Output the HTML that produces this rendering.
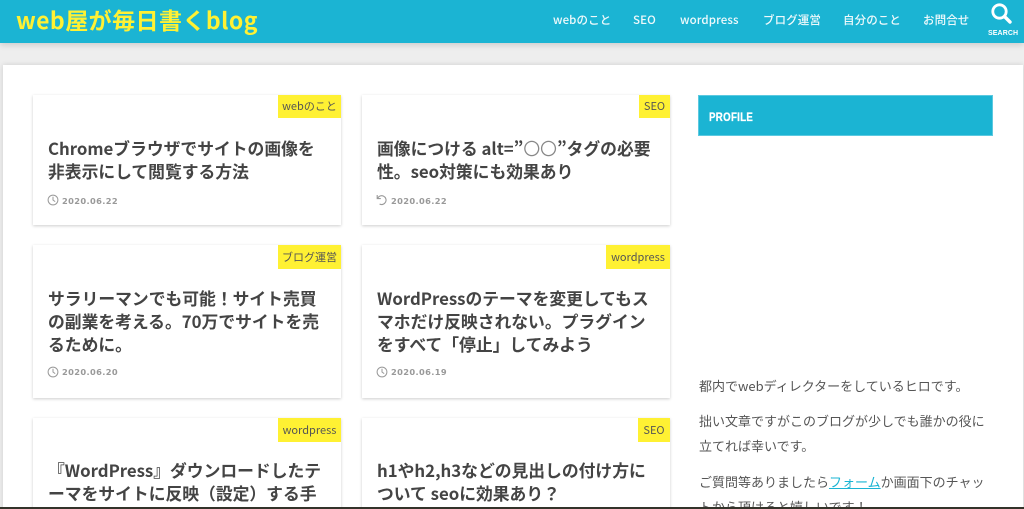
<!DOCTYPE html>
<html lang="ja"><head><meta charset="utf-8"><title>web屋が毎日書くblog</title>
<style>
*{box-sizing:border-box;margin:0;padding:0}
html,body{width:1024px;height:509px;overflow:hidden;background:#eee}
body{position:relative;font-family:"Noto Sans CJK JP",sans-serif;color:#444}
.blur{position:absolute;left:0;top:0;width:1024px;height:509px;overflow:hidden;filter:blur(.35px)}
.hd{position:absolute;left:0;top:0;width:1024px;height:43px;background:#1bb4d3;box-shadow:0 2px 6px rgba(0,0,0,.15)}
.logo{position:absolute;left:16px;top:3px;font-size:23px;line-height:33px;font-weight:700;color:#fff133;letter-spacing:.45px;white-space:nowrap}
.nav{position:absolute;top:11px;font-size:11.5px;line-height:19px;font-weight:500;color:#fff;opacity:.93;white-space:nowrap;letter-spacing:.1px}
.sr{position:absolute;left:988px;top:29px;width:28px;text-align:center;font-family:"Liberation Sans",sans-serif;font-size:7px;line-height:9px;font-weight:700;color:#fff;letter-spacing:.1px}
.main{position:absolute;left:3px;top:65px;width:1020px;height:460px;background:#fff;box-shadow:0 0 5px rgba(0,0,0,.14)}
.card{position:absolute;width:308px;background:#fff;box-shadow:0 1px 3px rgba(0,0,0,.2)}
.tag{position:absolute;right:0;top:0;height:23px;background:#fff133;font-size:11px;line-height:23px;text-align:center;color:#555;white-space:nowrap}
.t{position:absolute;left:15px;top:42px;width:286px;font-size:16.8px;line-height:23px;font-weight:700;color:#444;white-space:nowrap}
.t i{font-style:normal;font-weight:400;color:#888}
.d{position:absolute;left:29px;font-family:"DejaVu Sans",sans-serif;font-size:8.3px;line-height:12px;font-weight:700;color:#999;white-space:nowrap;letter-spacing:.35px}
.ic{position:absolute;left:14px;width:12px;height:12px}
.wt{position:absolute;left:698px;top:95px;width:295px;height:41px;background:#1bb4d3;border:1px solid #5cc9e0}
.wt span{position:absolute;left:10px;top:15px;font-family:"Liberation Sans",sans-serif;font-size:11.5px;line-height:14px;font-weight:700;color:#fff;letter-spacing:.4px;transform:scaleX(.84);transform-origin:left;-webkit-text-stroke:.3px #fff}
.p{position:absolute;left:699px;font-size:13px;line-height:25px;color:#555;white-space:nowrap}
.p a{color:#1bb4d3;text-decoration:underline}
.line{position:absolute;left:0;top:507px;width:1024px;height:2px;background:#33332a}
</style></head><body>
<div class="blur">
<div class="hd">
<div class="logo">web屋が毎日書くblog</div>
<div class="nav" style="left:553px">webのこと</div>
<div class="nav" style="left:633px">SEO</div>
<div class="nav" style="left:680px">wordpress</div>
<div class="nav" style="left:763px">ブログ運営</div>
<div class="nav" style="left:843px">自分のこと</div>
<div class="nav" style="left:923px">お問合せ</div>
<svg style="position:absolute;left:990px;top:2px" width="22" height="22" viewBox="0 0 22 22"><circle cx="9.5" cy="9.5" r="6.7" fill="none" stroke="#fff" stroke-width="2.8"/><path d="M14.5 14.5L20 20" stroke="#fff" stroke-width="3.4" stroke-linecap="round"/></svg>
<div class="sr">SEARCH</div>
</div>
<div class="main"></div>

<div class="card" style="left:33px;top:95px;height:130px"><div class="tag" style="width:63px">webのこと</div>
<div class="t">Chromeブラウザでサイトの画像を<br>非表示にして閲覧する方法</div>
<svg class="ic" style="top:99px" viewBox="0 0 12 12"><circle cx="6" cy="6" r="4.9" fill="none" stroke="#999" stroke-width="1"/><path d="M6 2.8V6L8.2 7.6" fill="none" stroke="#999"/></svg>
<div class="d" style="top:100px">2020.06.22</div></div>

<div class="card" style="left:362px;top:95px;height:130px"><div class="tag" style="width:31px">SEO</div>
<div class="t">画像につける alt=”<i>〇〇</i>”タグの必要<br>性。seo対策にも効果あり</div>
<svg class="ic" style="top:99px" viewBox="0 0 12 12"><path d="M1.2 1V4.6H4.8M1.6 4.4A4.4 4.4 0 1 1 3.6 10" fill="none" stroke="#999" stroke-width="1.1"/></svg>
<div class="d" style="top:100px">2020.06.22</div></div>

<div class="card" style="left:33px;top:245px;height:153px"><div class="tag" style="width:63px;height:24px;line-height:24px">ブログ運営</div>
<div class="t">サラリーマンでも可能！サイト売買<br>の副業を考える。70万でサイトを売<br>るために。</div>
<svg class="ic" style="top:121px" viewBox="0 0 12 12"><circle cx="6" cy="6" r="4.9" fill="none" stroke="#999" stroke-width="1"/><path d="M6 2.8V6L8.2 7.6" fill="none" stroke="#999"/></svg>
<div class="d" style="top:121px">2020.06.20</div></div>

<div class="card" style="left:362px;top:245px;height:153px"><div class="tag" style="width:64px;height:24px;line-height:24px">wordpress</div>
<div class="t">WordPressのテーマを変更してもス<br>マホだけ反映されない。プラグイン<br>をすべて「停止」してみよう</div>
<svg class="ic" style="top:121px" viewBox="0 0 12 12"><circle cx="6" cy="6" r="4.9" fill="none" stroke="#999" stroke-width="1"/><path d="M6 2.8V6L8.2 7.6" fill="none" stroke="#999"/></svg>
<div class="d" style="top:121px">2020.06.19</div></div>

<div class="card" style="left:33px;top:418px;height:110px"><div class="tag" style="width:63px;height:24px;line-height:24px">wordpress</div>
<div class="t" style="top:41px">『WordPress』ダウンロードしたテ<br>ーマをサイトに反映（設定）する手</div></div>

<div class="card" style="left:362px;top:418px;height:110px"><div class="tag" style="width:32px;height:24px;line-height:24px">SEO</div>
<div class="t" style="top:41px">h1やh2,h3などの見出しの付け方に<br>ついて seoに効果あり？</div></div>

<div class="wt"><span>PROFILE</span></div>
<div class="p" style="top:373px">都内でwebディレクターをしているヒロです。</div>
<div class="p" style="top:408px">拙い文章ですがこのブログが少しでも誰かの役に</div>
<div class="p" style="top:433px">立てれば幸いです。</div>
<div class="p" style="top:469px">ご質問等ありましたら<a>フォーム</a>か画面下のチャッ</div>
<div class="p" style="top:494px">トから頂けると嬉しいです！</div>
<div class="line"></div>
</div>
</body></html>
